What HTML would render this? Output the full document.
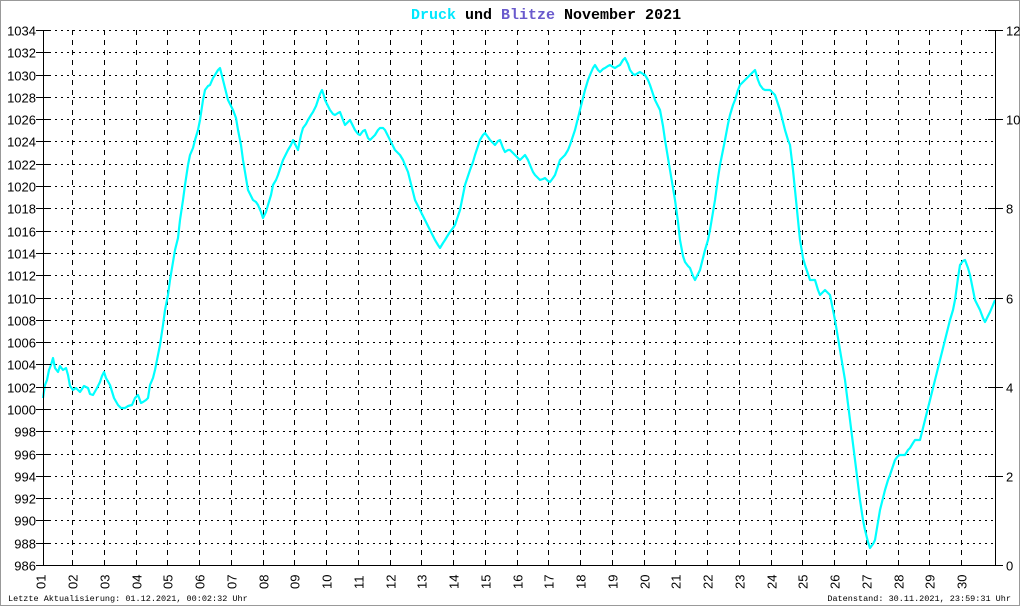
<!DOCTYPE html>
<html><head><meta charset="utf-8"><style>
html,body{margin:0;padding:0;background:#fff}
svg{display:block}
</style></head><body>
<svg width="1020" height="606" viewBox="0 0 1020 606" xmlns="http://www.w3.org/2000/svg">
<rect x="0.5" y="0.5" width="1019" height="605" fill="#fff" stroke="#999"/>
<text x="411" y="19" font-family="Liberation Mono, monospace" font-size="15" font-weight="bold"><tspan fill="#00e8ff">Druck</tspan><tspan fill="#000"> und </tspan><tspan fill="#6a5acd">Blitze</tspan><tspan fill="#000"> November 2021</tspan></text>
<g id="grid" stroke="#000" stroke-width="1" fill="none"></g>
<g id="labs" font-family="Liberation Sans, sans-serif" font-size="13" fill="#000"></g>
<polyline id="curve" fill="none" stroke="#00ffff" stroke-width="2.2" stroke-linejoin="round" points="43,398 45,385 47,380 49,370 51,365 53,358 55,368 58,372 60,366 63,370 66,368 68,375 70,386 73,390 76,388 80,392 84,386 88,388 90,394 93,395 97,388 100,382 102,376 104,372 106,378 110,385 114,398 118,405 121,408 125,408 128,406 132,405 135,398 138,395 141,403 143,402 146,400 148,398 150,385 153,378 155,370 158,355 160,345 163,325 165,310 168,295 170,280 173,262 175,250 178,238 180,220 183,200 185,185 188,165 190,155 193,148 195,140 198,130 200,120 203,100 205,90 208,86 210,85 213,78 215,75 218,70 220,68 222,76 223,80 226,92 228,100 231,106 233,110 236,118 238,130 241,145 243,160 246,178 248,190 251,196 253,200 256,202 258,205 261,212 263,218 266,212 268,205 271,195 273,185 276,180 278,175 281,166 283,160 286,154 288,150 291,145 293,140 296,146 298,150 301,135 303,128 306,124 308,120 311,115 313,112 316,106 318,100 320,94 322,90 324,96 325,100 328,106 330,110 333,114 335,115 338,113 340,112 343,120 345,125 348,122 350,120 353,126 355,130 358,134 360,135 363,131 365,130 368,138 370,140 373,137 375,135 378,130 380,128 383,128 385,130 388,136 390,140 393,146 395,150 398,153 400,155 403,160 405,165 408,172 410,180 413,192 415,200 418,206 420,210 423,216 425,220 428,226 430,230 433,236 435,240 438,245 440,248 443,243 445,240 448,235 450,232 453,228 455,225 458,216 460,210 463,195 465,185 468,176 470,170 473,162 475,155 478,146 480,140 483,135 485,133 488,137 490,140 493,143 495,145 498,141 500,140 503,148 505,152 508,150 510,150 513,153 515,155 518,158 520,160 523,157 525,155 528,160 530,165 533,172 535,175 538,178 540,180 543,179 545,178 548,181 550,182 553,178 555,175 558,166 560,160 563,157 565,155 568,150 570,145 573,136 575,130 578,118 580,110 583,98 585,90 588,80 590,75 593,68 595,65 598,70 600,72 603,69 605,68 608,66 610,65 613,67 615,68 618,66 620,65 623,60 625,58 628,64 630,70 633,74 635,75 638,73 640,72 643,74 645,75 648,80 650,85 653,94 655,100 658,106 660,110 663,126 665,140 668,158 670,170 673,188 675,200 678,222 680,240 683,256 685,262 688,266 690,268 693,276 695,280 698,274 700,270 703,258 705,250 708,240 710,230 713,212 715,200 718,178 720,165 723,150 725,140 728,124 730,115 733,105 735,100 738,90 740,85 743,82 745,80 748,77 750,75 753,72 755,70 758,80 760,85 763,89 765,90 768,90 770,90 773,93 775,95 778,104 780,110 783,122 785,130 788,140 790,145 793,170 795,190 798,220 800,240 803,258 805,265 808,274 810,280 813,280 815,280 818,290 820,295 823,292 825,290 828,293 830,295 833,310 835,320 838,338 840,350 843,368 845,380 848,404 850,420 853,444 855,460 858,484 860,500 863,520 865,530 868,542 870,548 873,544 875,540 878,522 880,510 883,498 885,490 888,480 890,475 893,466 895,460 898,456 900,455 903,455 905,455 908,450 910,448 913,443 915,440 918,440 920,440 923,428 925,420 928,408 930,400 933,388 935,380 938,368 940,360 943,348 945,340 948,328 950,320 953,310 955,300 958,278 960,265 963,261 965,260 968,268 970,275 973,290 975,300 978,306 980,310 983,318 985,322 988,316 990,312 993,305 995,300"/>
<line x1="43.5" y1="30" x2="43.5" y2="566" stroke="#000"/>
<line x1="995.5" y1="30" x2="995.5" y2="566" stroke="#000"/>
<line x1="36" y1="565.5" x2="1003" y2="565.5" stroke="#000"/>
<text x="8" y="601" font-family="Liberation Mono, monospace" font-size="8.5" fill="#000">Letzte Aktualisierung: 01.12.2021, 00:02:32 Uhr</text>
<text x="1011" y="601" text-anchor="end" font-family="Liberation Mono, monospace" font-size="8.5" fill="#000">Datenstand: 30.11.2021, 23:59:31 Uhr</text>
</svg>
<script>
(function(){
var ns="http://www.w3.org/2000/svg";
var g=document.getElementById('grid'),L=document.getElementById('labs');
function el(p,t,a){var e=document.createElementNS(ns,t);for(var k in a)e.setAttribute(k,a[k]);p.appendChild(e);return e;}
for(var i=0;i<=24;i++){
  var y=Math.round(30+i*535/24)+0.5;
  if(i<24) el(g,'line',{x1:43,y1:y,x2:995,y2:y,'stroke-dasharray':'2,4'});
  el(g.parentNode,'line',{x1:36,y1:y,x2:51,y2:y,stroke:'#000'});
  var t=el(L,'text',{x:36,y:y+5,'text-anchor':'end'});t.textContent=(1034-2*i);
  if(i%4==0){el(g.parentNode,'line',{x1:988,y1:y,x2:1003,y2:y,stroke:'#000'});
    var r=el(L,'text',{x:1006,y:y+5});r.textContent=(12-i/2*1);}
}
for(var k=1;k<=30;k++){
  var x=Math.round(72+(k-2)*31.75)+0.5;
  if(k>1) el(g,'line',{x1:x,y1:30,x2:x,y2:566,'stroke-dasharray':'5,5'});
  var s=(k<10?'0':'')+k;
  var t=el(L,'text',{transform:'translate('+(x+5)+',589) rotate(-90)'});t.textContent=s;
}
})();
</script>
</body></html>
